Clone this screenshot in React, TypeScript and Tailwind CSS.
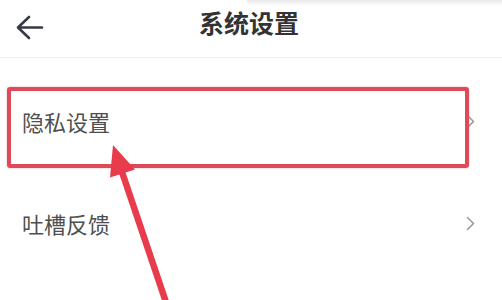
import React from "react";

const Chevron = () => (
  <svg width="9" height="15" viewBox="0 0 9 15" fill="none">
    <path d="M1.5 1.5 L7.5 7.5 L1.5 13.5" stroke="#9a9a9a" strokeWidth="1.6" strokeLinecap="round" strokeLinejoin="round" />
  </svg>
);

export default function App() {
  const font = { fontFamily: '"Noto Sans CJK SC", "Noto Sans", sans-serif' };
  return (
    <div className="relative w-[502px] h-[300px] overflow-hidden bg-white" style={font}>
      <div className="absolute right-0 top-0 h-[6px] w-[255px] bg-gradient-to-b from-[#e9e9e9] to-white rounded-bl-[6px]" />
      <div className="relative flex h-[58px] items-center border-b border-[#efefef]">
        <div className="pl-[16px] flex items-center">
          <svg width="28" height="28" viewBox="0 0 28 28" fill="none">
            <path d="M26 12.5 H3 M13 2 L2 12.5 L13 23" stroke="#353b45" strokeWidth="2.6" strokeLinecap="round" strokeLinejoin="round" />
          </svg>
        </div>
        <div className="absolute left-0 right-0 top-[5px] text-center text-[25px] leading-[34px] font-bold text-[#333333]">
          <span className="mr-[4px]">系统设置</span>
        </div>
      </div>
      <div className="mt-[12px] flex flex-col">
        <div className="flex h-[102px] items-center justify-between pl-[22px] pr-[27px]">
          <span className="text-[22px] text-[#4f4f4f]">隐私设置</span>
          <Chevron />
        </div>
        <div className="flex h-[102px] items-center justify-between pl-[22px] pr-[27px]">
          <span className="text-[22px] text-[#4f4f4f]">吐槽反馈</span>
          <Chevron />
        </div>
      </div>
      <div className="absolute left-[7px] top-[87px] h-[81px] w-[462px] rounded-[3px] border-[4px] border-[#df4a59] shadow-[0_0_2px_rgba(223,74,89,0.5)]" />
      <svg className="absolute left-0 top-0" width="502" height="300" viewBox="0 0 502 300">
        <line x1="122" y1="172" x2="172" y2="320" stroke="#e83b4c" strokeWidth="6.5" />
        <polygon points="113,145 135,169.5 110,177.5" fill="#e83b4c" />
      </svg>
    </div>
  );
}
